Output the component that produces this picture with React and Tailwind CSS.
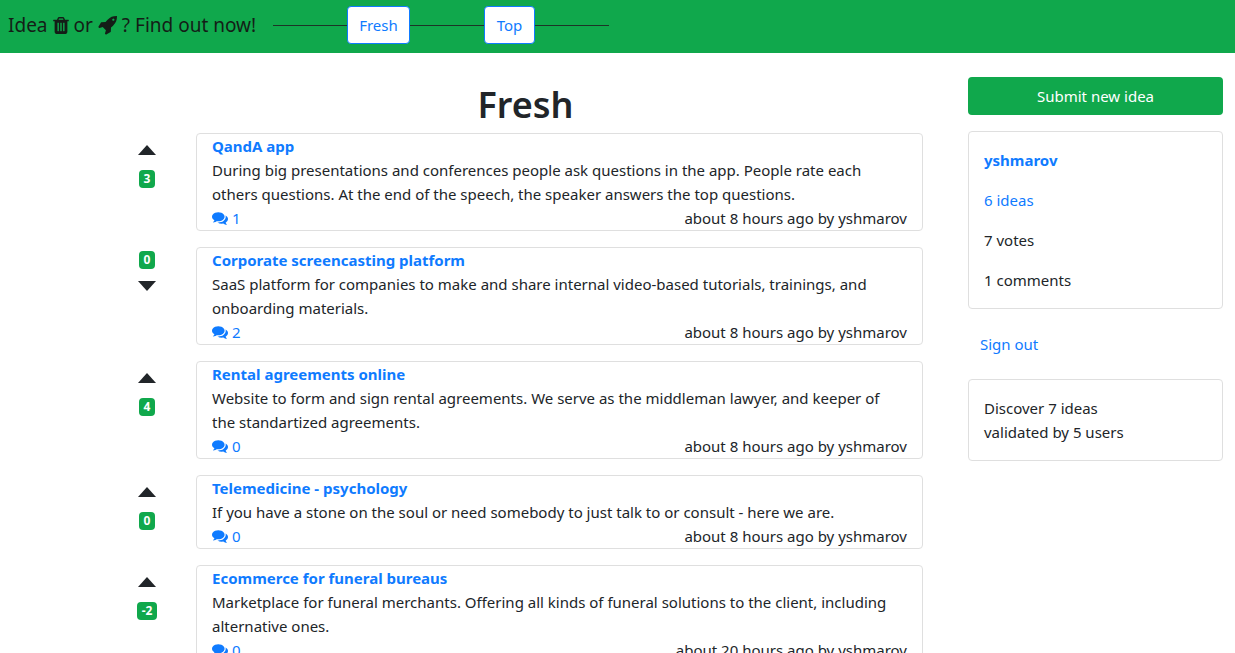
const ideas = [
  { title: "QandA app", text: "During big presentations and conferences people ask questions in the app. People rate each others questions. At the end of the speech, the speaker answers the top questions.", comments: 1, votes: 3, when: "about 8 hours ago" },
  { title: "Corporate screencasting platform", text: "SaaS platform for companies to make and share internal video-based tutorials, trainings, and onboarding materials.", comments: 2, votes: 0, voted: true, when: "about 8 hours ago" },
  { title: "Rental agreements online", text: "Website to form and sign rental agreements. We serve as the middleman lawyer, and keeper of the standartized agreements.", comments: 0, votes: 4, when: "about 8 hours ago" },
  { title: "Telemedicine - psychology", text: "If you have a stone on the soul or need somebody to just talk to or consult - here we are.", comments: 0, votes: 0, when: "about 8 hours ago" },
  { title: "Ecommerce for funeral bureaus", text: "Marketplace for funeral merchants. Offering all kinds of funeral solutions to the client, including alternative ones.", comments: 0, votes: -2, when: "about 20 hours ago" },
];

function TrashIcon() {
  return (
    <svg width="16" height="17" viewBox="192 128 1408 1536" fill="currentColor" aria-hidden="true">
      <path d="M704 1376v-704q0-14-9-23t-23-9h-64q-14 0-23 9t-9 23v704q0 14 9 23t23 9h64q14 0 23-9t9-23zm256 0v-704q0-14-9-23t-23-9h-64q-14 0-23 9t-9 23v704q0 14 9 23t23 9h64q14 0 23-9t9-23zm256 0v-704q0-14-9-23t-23-9h-64q-14 0-23 9t-9 23v704q0 14 9 23t23 9h64q14 0 23-9t9-23zm-544-992h448l-48-117q-7-9-17-11h-317q-10 2-17 11zm928 32v64q0 14-9 23t-23 9h-96v948q0 83-47 143.5t-113 60.5h-832q-66 0-113-58.5t-47-141.5v-952h-96q-14 0-23-9t-9-23v-64q0-14 9-23t23-9h309l70-167q15-37 54-63t79-26h320q40 0 79 26t54 63l70 167h309q14 0 23 9t9 23z" />
    </svg>
  );
}

function RocketIcon() {
  return (
    <svg width="19" height="19" viewBox="0 0 1664 1664" fill="currentColor" aria-hidden="true">
      <path d="M1440 320q0-40-28-68t-68-28-68 28-28 68 28 68 68 28 68-28 28-68zm224-288q0 249-75.5 430.5t-253.5 360.5q-81 80-195 176l-20 379q-2 16-16 26l-384 224q-7 4-16 4-12 0-23-9l-64-64q-13-14-8-32l85-276-281-281-276 85q-3 1-9 1-14 0-23-9l-64-64q-17-19-5-39l224-384q10-14 26-16l379-20q96-114 176-195 188-187 358-258t431-71q14 0 24 9.5t10 22.5z" />
    </svg>
  );
}

function CommentsIcon() {
  return (
    <svg width="16" height="13" viewBox="0 256 1792 1408" fill="currentColor" aria-hidden="true">
      <path d="M1408 768q0 139-94 257t-256.5 186.5-353.5 68.5q-86 0-176-16-124 88-278 128-36 9-86 16h-3q-11 0-20.5-8t-11.5-21q-1-3-1-6.5t.5-6.5 2-6l2.5-5 3.5-5.5 4-5 4.5-5 4-4.5q5-6 23-25t26-29.5 22.5-29 25-38.5 20.5-44q-124-72-195-177t-71-224q0-139 94-257t256.5-186.5 353.5-68.5 353.5 68.5 256.5 186.5 94 257zm384 256q0 120-71 224.5t-195 176.5q10 24 20.5 44t25 38.5 22.5 29 26 29.5 23 25q1 1 4 4.5t4.5 5 4 5 3.5 5.5l2.5 5 2 6 .5 6.5-1 6.5q-3 14-13 22t-22 7q-50-7-86-16-154-40-278-128-90 16-176 16-271 0-472-132 58 4 88 4 161 0 309-45t264-129q125-92 192-212t67-254q0-77-23-152 129 71 204 178t75 230z" />
    </svg>
  );
}

function VoteButton({ down }) {
  return (
    <button aria-label={down ? "Vote down" : "Vote up"} className="flex h-[34px] w-8 items-center justify-center">
      <svg width="18" height="10" viewBox="0 0 18 10" fill="#212529">
        <path d={down ? "M0 0H18L9 10Z" : "M0 10H18L9 0Z"} />
      </svg>
    </button>
  );
}

function Votes({ idea }) {
  const badge = (
    <span className="rounded bg-[#10a84c] px-[5px] text-xs leading-[18px] font-bold text-white">{idea.votes}</span>
  );
  return (
    <div className="flex w-[98px] shrink-0 flex-col items-center">
      {idea.voted ? (
        <>
          <div className="flex pt-1">{badge}</div>
          <VoteButton down />
        </>
      ) : (
        <>
          <VoteButton />
          <div className="flex pt-[3px]">{badge}</div>
        </>
      )}
    </div>
  );
}

function Idea({ idea }) {
  return (
    <div className="flex">
      <Votes idea={idea} />
      <article className="min-w-0 flex-1 rounded border border-[#dfdfdf] px-[15px] leading-6">
        <h2>
          <a href="#idea" className="font-bold text-[#0f7bff]">{idea.title}</a>
        </h2>
        <p className="pr-4">{idea.text}</p>
        <div className="flex justify-between">
          <a href="#comments" className="flex items-center gap-1 text-[#0f7bff]">
            <CommentsIcon />
            {idea.comments}
          </a>
          <span>{idea.when} by yshmarov</span>
        </div>
      </article>
    </div>
  );
}

export default function App() {
  return (
    <div className="min-h-screen bg-white font-['Noto_Sans',sans-serif] text-[15px] leading-6 text-[#212529]">
      <header className="flex h-[53px] items-center bg-[#10a84c] px-2 pb-[3px]">
        <a href="#home" className="flex items-center gap-[5px] text-[19px] text-[#141d17]">
          Idea <TrashIcon /> or <RocketIcon /> ? Find out now!
        </a>
        <nav className="ml-[17px] flex items-center">
          <span className="h-px w-[74px] bg-[#1c3527]" />
          <a href="#fresh" className="rounded border border-[#0f7bff] bg-white px-[11px] py-1.5 text-[#0f7bff]">Fresh</a>
          <span className="h-px w-[74px] bg-[#1c3527]" />
          <a href="#top" className="rounded border border-[#0f7bff] bg-white px-3 py-1.5 text-[#0f7bff]">Top</a>
          <span className="h-px w-[74px] bg-[#1c3527]" />
        </nav>
      </header>
      <div className="flex pt-6 pr-3 pl-[98px]">
        <main className="min-w-0 flex-1">
          <h1 className="mb-1 pt-1 pl-[30px] text-center text-4xl leading-12 font-semibold">Fresh</h1>
          <div className="flex flex-col gap-4">
            {ideas.map((idea) => <Idea key={idea.title} idea={idea} />)}
          </div>
        </main>
        <aside className="ml-[45px] w-[255px] shrink-0">
          <button className="w-full rounded bg-[#10a84c] py-[7px] text-white">Submit new idea</button>
          <section className="mt-4 flex flex-col gap-4 rounded border border-[#dfdfdf] px-[15px] py-4">
            <a href="#profile" className="font-bold text-[#0f7bff]">yshmarov</a>
            <a href="#ideas" className="text-[#0f7bff]">6 ideas</a>
            <p>7 votes</p>
            <p>1 comments</p>
          </section>
          <a href="#signout" className="my-4 block px-3 py-[7px] text-[#0f7bff]">Sign out</a>
          <section className="rounded border border-[#dfdfdf] px-[15px] py-4">
            <p>Discover 7 ideas</p>
            <p>validated by 5 users</p>
          </section>
        </aside>
      </div>
    </div>
  );
}
